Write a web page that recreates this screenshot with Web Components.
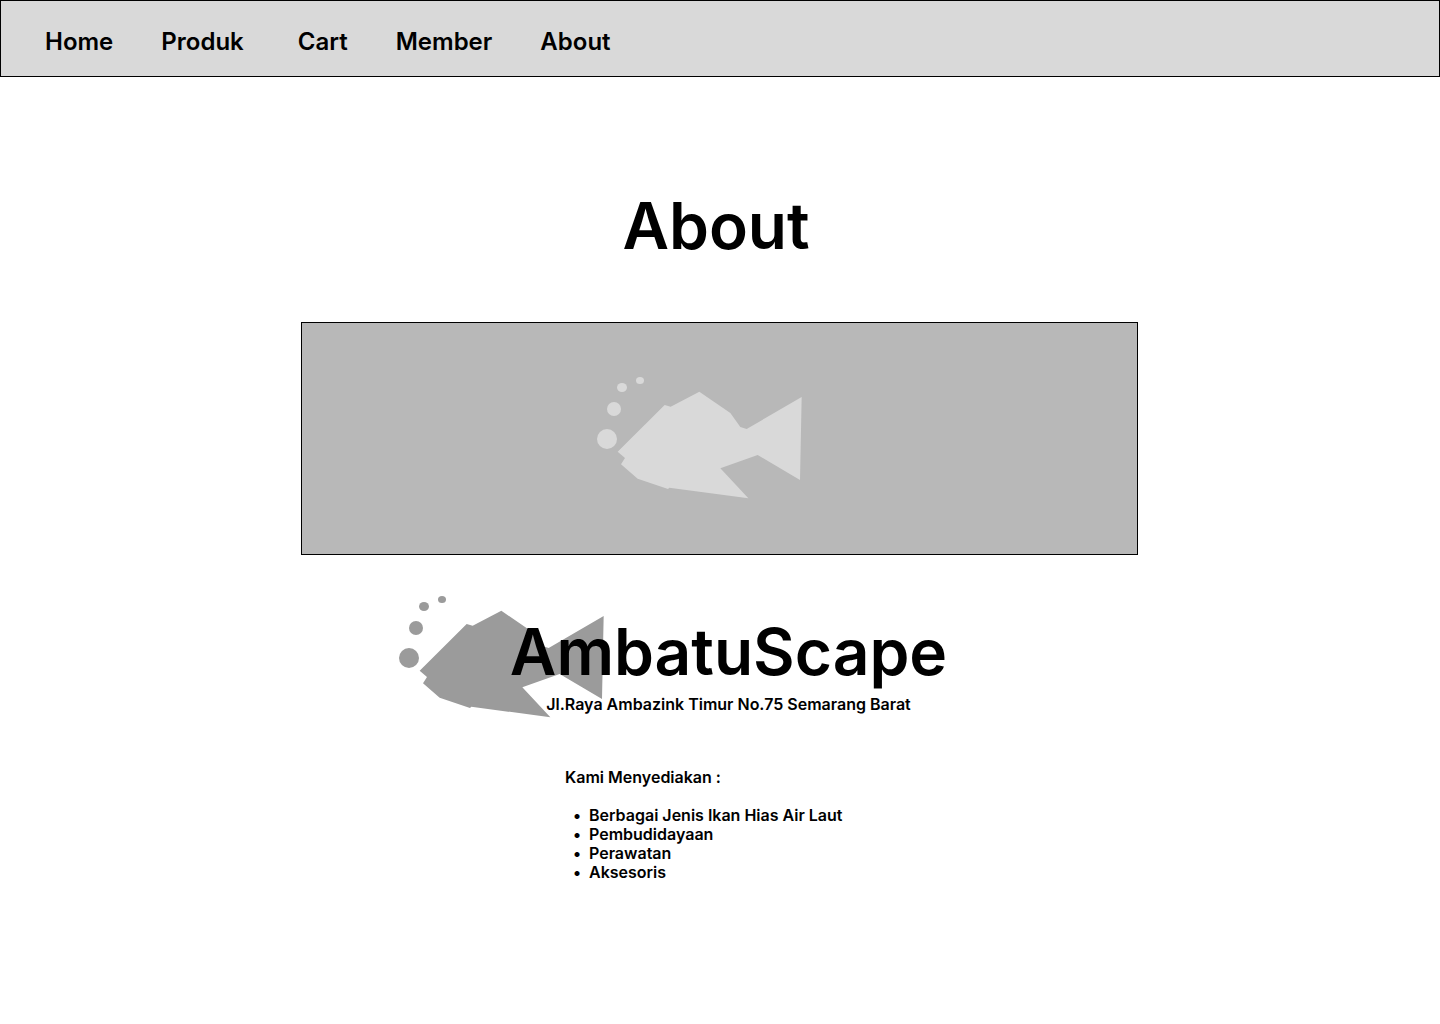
<!DOCTYPE html>
<html lang="id">
<head>
<meta charset="utf-8">
<meta name="viewport" content="width=device-width, initial-scale=1">
<title>AmbatuScape - About</title>
<style>
body { margin: 0; background: #fff; color: #000; font: 600 16px/19px Inter, sans-serif; }
</style>
</head>
<body>
<about-page></about-page>

<template id="nav-bar">
<style>
:host { display: block; box-sizing: border-box; background: #d9d9d9; border: 1px solid #000; }
nav { display: flex; flex-wrap: wrap; gap: 48px; padding: 26px 44px 20px; font-size: 24px; line-height: 29px; }
::slotted(a) { color: inherit; text-decoration: none; white-space: pre; }
</style>
<nav aria-label="Menu"><slot></slot></nav>
</template>

<template id="fish-logo">
<style>
:host { display: block; width: 205px; height: 122px; color: #d9d9d9; }
svg { display: block; width: 100%; height: 100%; fill: currentColor; }
</style>
<svg viewBox="21 21 615 366" aria-hidden="true">
<circle cx="51" cy="207" r="30"/>
<circle cx="72" cy="117" r="21"/>
<ellipse cx="96" cy="52.5" rx="15" ry="13.5"/>
<ellipse cx="150" cy="31.5" rx="12" ry="10.5"/>
<path d="M83 245 224 105 242 110 328 65 421 129 451 171 470 177 635 81 630 330 503 255 391 295 475 385 238 353 234 357 143 326 93 283 105 264Z"/>
</svg>
</template>

<template id="hero-banner">
<style>
:host { display: flex; align-items: center; justify-content: center; box-sizing: border-box; background: #b8b8b8; border: 1px solid #000; padding: 54px 40px 55px; }
fish-logo { margin-right: 40px; }
</style>
<fish-logo></fish-logo>
</template>

<template id="brand-block">
<style>
:host { display: block; box-sizing: border-box; position: relative; padding-left: 18px; text-align: center; }
fish-logo { position: absolute; left: 98px; top: -17px; color: #9b9b9b; }
h2 { position: relative; margin: 0; font-size: 64px; font-weight: 600; line-height: 77px; }
p { position: relative; margin: 5px 0 0; }
</style>
<fish-logo></fish-logo>
<h2><slot name="name"></slot></h2>
<p><slot name="address"></slot></p>
</template>

<template id="service-list">
<style>
:host { display: block; max-width: 309px; margin: 0 auto; }
p { margin: 0 0 19px; }
ul { list-style: none; margin: 0; padding: 0; }
li { display: flex; }
li::before { content: "•"; flex: 0 0 24px; text-align: center; }
</style>
<p>Kami Menyediakan :</p>
<ul>
<li>Berbagai Jenis Ikan Hias Air Laut</li>
<li>Pembudidayaan</li>
<li>Perawatan</li>
<li>Aksesoris</li>
</ul>
</template>

<template id="about-page">
<style>
:host { display: block; }
main { padding: 110px 1px 110px 0; }
h1 { margin: 0 0 58px; padding-right: 7px; text-align: center; font-size: 64px; font-weight: 600; line-height: 77px; }
hero-banner, brand-block { max-width: 837px; margin: 0 auto 58px; }
brand-block { margin-bottom: 54px; }
</style>
<nav-bar>
<a href="#home">Home</a>
<a href="#produk">Produk&nbsp;</a>
<a href="#cart">Cart</a>
<a href="#member">Member</a>
<a href="#about">About</a>
</nav-bar>
<main>
<h1>About</h1>
<hero-banner></hero-banner>
<brand-block>
<span slot="name">AmbatuScape</span>
<span slot="address">Jl.Raya Ambazink Timur No.75 Semarang Barat</span>
</brand-block>
<service-list></service-list>
</main>
</template>

<script>
class TemplateElement extends HTMLElement {
  constructor() {
    super();
    const template = document.getElementById(this.localName);
    this.attachShadow({ mode: "open" }).append(template.content.cloneNode(true));
  }
}
for (const name of ["fish-logo", "nav-bar", "hero-banner", "brand-block", "service-list", "about-page"]) {
  customElements.define(name, class extends TemplateElement {});
}
</script>
</body>
</html>
